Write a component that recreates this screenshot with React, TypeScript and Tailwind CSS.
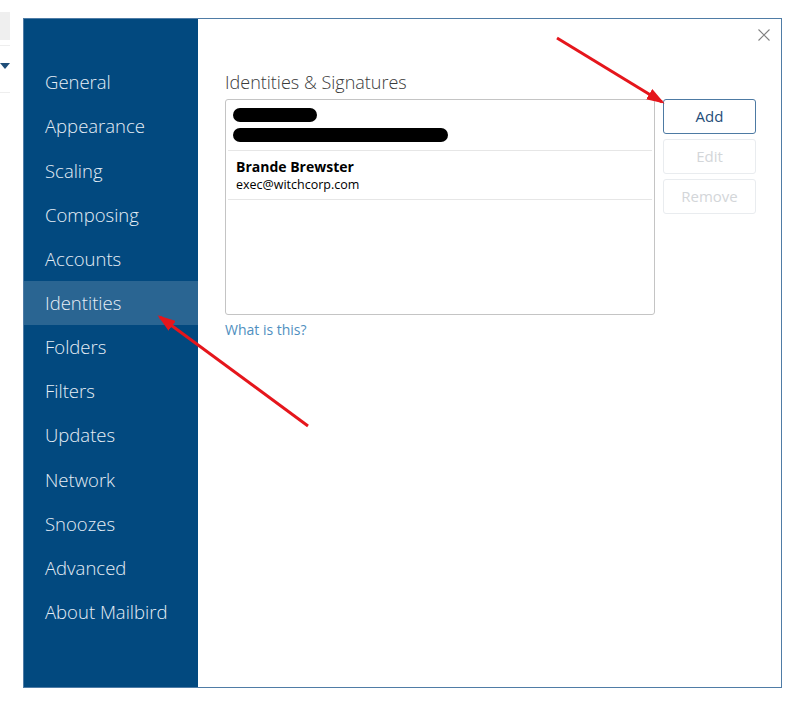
import React from "react";

const navItems = [
  "General",
  "Appearance",
  "Scaling",
  "Composing",
  "Accounts",
  "Identities",
  "Folders",
  "Filters",
  "Updates",
  "Network",
  "Snoozes",
  "Advanced",
  "About Mailbird",
];

const font = { fontFamily: '"Open Sans", "Noto Sans", sans-serif' };

function Sidebar({ active }: { active: string }) {
  return (
    <nav className="flex w-[174px] shrink-0 flex-col bg-[#02497f] pt-[41px]">
      {navItems.map((item) => (
        <div
          key={item}
          className={`flex h-[44.17px] items-center pl-[21px] text-[18.5px] font-light text-[#e6eef6] ${
            item === active ? "bg-[#2a6592]" : ""
          }`}
        >
          {item}
        </div>
      ))}
    </nav>
  );
}

function ActionButton({ label, enabled }: { label: string; enabled?: boolean }) {
  return (
    <button
      className={`flex h-[35px] w-[93px] items-center justify-center rounded-[3px] border text-[15px] ${
        enabled
          ? "border-[#4d7aa3] text-[#1f4e79]"
          : "border-[#e9ecef] text-[#d3d6d9]"
      }`}
    >
      {label}
    </button>
  );
}

function IdentitiesPanel() {
  return (
    <div className="relative flex-1 bg-white pl-[27px] pt-[51px]">
      <button className="absolute right-[11px] top-[10px] flex h-[12px] w-[12px] items-center justify-center text-[#808080]">
        <svg viewBox="0 0 12 12" className="h-[12px] w-[12px]" fill="none" stroke="currentColor" strokeWidth="1.1">
          <path d="M0.5 0.5 L11.5 11.5 M11.5 0.5 L0.5 11.5" />
        </svg>
      </button>
      <h2 className="text-[18px] font-light leading-[25px] text-[#3a3a3a]">Identities &amp; Signatures</h2>
      <div className="mt-[4px] flex gap-[8px]">
        <div className="h-[216px] w-[430px] rounded-[3px] border border-[#c4c4c4] px-[2px]">
          <div className="flex h-[51px] flex-col justify-center gap-[6px] border-b border-[#e6e6e6] px-[5px]">
            <div className="h-[14px] w-[84px] rounded-full bg-black" />
            <div className="h-[14px] w-[215px] rounded-full bg-black" />
          </div>
          <div className="flex h-[49px] flex-col justify-center border-b border-[#e6e6e6] px-[8px] text-black">
            <div className="text-[14px] font-bold leading-[19px]">Brande Brewster</div>
            <div className="text-[12.5px] leading-[18px]">exec@witchcorp.com</div>
          </div>
        </div>
        <div className="flex flex-col gap-[5px]">
          <ActionButton label="Add" enabled />
          <ActionButton label="Edit" />
          <ActionButton label="Remove" />
        </div>
      </div>
      <a className="mt-[4px] block text-[14px] text-[#4f8fc0]">What is this?</a>
    </div>
  );
}

function Arrows() {
  return (
    <svg className="pointer-events-none absolute inset-0 h-full w-full" viewBox="0 0 800 707">
      <defs>
        <marker id="head" markerWidth="6" markerHeight="4" refX="5" refY="2" orient="auto" markerUnits="strokeWidth">
          <path d="M0 0 L6 2 L0 4 Z" fill="#e5161c" />
        </marker>
      </defs>
      <line x1="557" y1="38" x2="662" y2="102" stroke="#e5161c" strokeWidth="3" markerEnd="url(#head)" />
      <line x1="308" y1="426" x2="160" y2="317" stroke="#e5161c" strokeWidth="3" markerEnd="url(#head)" />
    </svg>
  );
}

export default function App() {
  return (
    <div className="relative h-[707px] w-[800px] overflow-hidden bg-white" style={font}>
      <div className="absolute left-0 top-[12px] h-[28px] w-[10px] bg-[#efefef]" />
      <div className="absolute left-0 top-[45px] h-px w-[10px] bg-[#eeeeee]" />
      <div className="absolute left-0 top-[63px] h-0 w-0 border-x-[5px] border-t-[6px] border-x-transparent border-t-[#1f4e79]" />
      <div className="absolute left-0 top-[92px] h-px w-[10px] bg-[#eeeeee]" />
      <div className="absolute left-[23px] top-[18px] flex h-[670px] w-[759px] border border-[#4f7ca6]">
        <Sidebar active="Identities" />
        <IdentitiesPanel />
      </div>
      <Arrows />
    </div>
  );
}
